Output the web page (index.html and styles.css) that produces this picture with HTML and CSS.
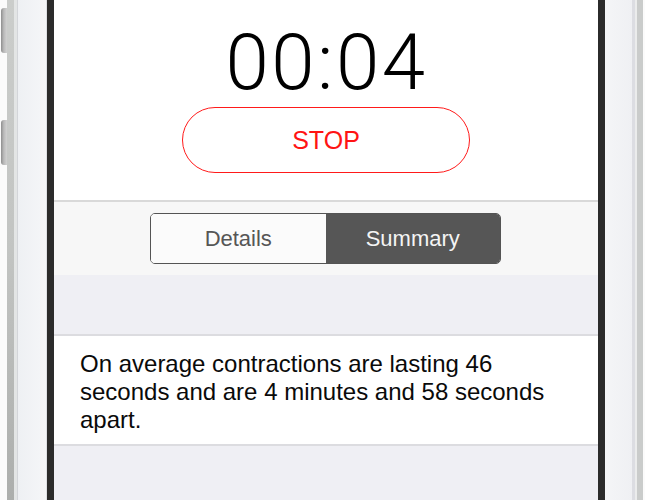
FILE: index.html
```html
<!DOCTYPE html>
<html>
<head>
<meta charset="utf-8">
<link rel="stylesheet" href="styles.css">
</head>
<body>
<div class="device">
  <div class="edge edge-left">
    <div class="outer">
      <span class="vol vol-up"></span>
      <span class="vol vol-down"></span>
    </div>
    <div class="strip metal"></div>
    <div class="strip shine"></div>
    <div class="strip hair"></div>
    <div class="strip face-l"></div>
    <div class="strip hair2"></div>
    <div class="strip bezel"></div>
  </div>
  <div class="screen">
    <section class="timer-area">
      <div class="timer">00:04</div>
      <button class="stop">STOP</button>
    </section>
    <section class="seg-area">
      <div class="segmented">
        <div class="seg seg-off">Details</div>
        <div class="seg seg-on">Summary</div>
      </div>
    </section>
    <section class="spacer"></section>
    <section class="summary">
      <p class="summary-text">On average contractions are lasting 46 seconds and are 4 minutes and 58 seconds apart.</p>
    </section>
    <section class="rest"></section>
  </div>
  <div class="edge edge-right">
    <div class="strip bezel"></div>
    <div class="strip face-r"></div>
    <div class="strip hair3"></div>
    <div class="strip shine2"></div>
    <div class="strip metal2"></div>
    <div class="strip outer2"></div>
  </div>
</div>
</body>
</html>
```

FILE: styles.css
```css
html, body {
  margin: 0;
  padding: 0;
  background: #ffffff;
}

body {
  font-family: "Liberation Sans", Arial, sans-serif;
}

.device {
  display: flex;
  width: 645px;
  height: 500px;
  overflow: hidden;
}

.edge {
  display: flex;
  flex-shrink: 0;
  height: 100%;
}

.strip {
  height: 100%;
  flex-shrink: 0;
}

.outer {
  position: relative;
  width: 7px;
  height: 100%;
  background: #fbfbfb;
}

.vol {
  position: absolute;
  left: 1px;
  width: 6px;
  height: 45px;
  border-radius: 3px 0 0 3px;
  background: linear-gradient(to right, #8e8e8e 0%, #b9b9b9 45%, #d2d2d2 100%);
}

.vol-up { top: 8px; }
.vol-down { top: 120px; }

.metal {
  width: 7px;
  background: linear-gradient(to bottom, #cbcdcb 0%, #c2c4c2 50%, #acaeac 100%);
}
.shine { width: 3px; background: #e3e5e5; }
.hair { width: 1px; background: #d3d5d9; }
.face-l { width: 28px; background: linear-gradient(to right, #eef0f3, #f5f6f8); }
.hair2 { width: 1px; background: #dfe0e4; }
.bezel { width: 7px; background: #2b2b2b; }

.face-r { width: 27px; background: linear-gradient(to right, #f4f5f7, #eff0f3); }
.hair3 { width: 3px; background: #dcdde2; }
.shine2 { width: 2px; background: #ebecec; }
.metal2 { width: 6px; background: #cacccb; }
.outer2 { width: 2px; background: #fbfbfb; }

.screen {
  width: 544px;
  flex-shrink: 0;
  display: flex;
  flex-direction: column;
  height: 100%;
}

.timer-area {
  height: 200px;
  background: #ffffff;
  display: flex;
  flex-direction: column;
  align-items: center;
  border-bottom: 2px solid #d9d9d9;
  box-sizing: content-box;
}

.timer {
  font-family: "Roboto", "Liberation Sans", sans-serif;
  font-weight: 300;
  font-size: 78px;
  line-height: 78px;
  letter-spacing: 2.5px;
  padding-left: 1px;
  color: #000;
  margin-top: 24px;
  height: 78px;
}

.stop {
  margin-top: 5px;
  width: 288px;
  height: 66px;
  border: 1.5px solid #ff1a1a;
  border-radius: 33px;
  background: #ffffff;
  color: #ff1414;
  font-family: "Liberation Sans", Arial, sans-serif;
  font-size: 25px;
  padding: 0;
}

.seg-area {
  height: 73px;
  background: #f7f7f7;
  display: flex;
  justify-content: center;
  align-items: center;
}

.segmented {
  display: flex;
  width: 351px;
  height: 51px;
  box-sizing: border-box;
  border: 1.5px solid #545454;
  border-radius: 5px;
  overflow: hidden;
  margin-left: -1px;
}

.seg {
  flex: 1;
  display: flex;
  align-items: center;
  justify-content: center;
  font-size: 22px;
}

.seg-off {
  background: #fbfbfb;
  color: #565656;
}

.seg-on {
  background: #565656;
  color: #f4f4f4;
}

.spacer {
  height: 59px;
  background: #efeff4;
  border-bottom: 2px solid #dcdce0;
}

.summary {
  height: 110px;
  background: #ffffff;
  border-bottom: 2px solid #dcdce0;
  box-sizing: border-box;
  padding: 14px 40px 0 26px;
}

.summary-text {
  margin: 0;
  font-size: 24px;
  line-height: 28px;
  color: #0a0a0a;
}

.rest {
  flex: 1;
  background: #efeff4;
}
```
